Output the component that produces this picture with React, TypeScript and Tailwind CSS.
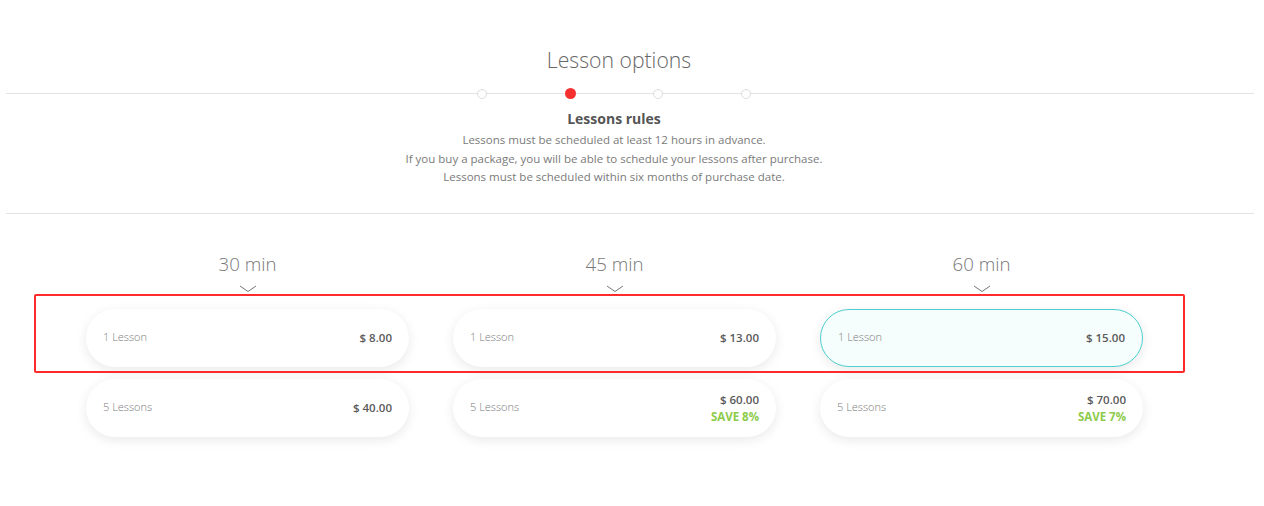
type option = {
    label: string,
    price: string,
    save?: string,
    selected?: boolean
}

type column = {
    duration: string,
    options: option[]
}

const columns: column[] = [
    {
        duration: "30 min",
        options: [
            { label: "1 Lesson", price: "$ 8.00" },
            { label: "5 Lessons", price: "$ 40.00" },
        ]
    },
    {
        duration: "45 min",
        options: [
            { label: "1 Lesson", price: "$ 13.00" },
            { label: "5 Lessons", price: "$ 60.00", save: "SAVE 8%" },
        ]
    },
    {
        duration: "60 min",
        options: [
            { label: "1 Lesson", price: "$ 15.00", selected: true },
            { label: "5 Lessons", price: "$ 70.00", save: "SAVE 7%" },
        ]
    },
]

const rules = [
    "Lessons must be scheduled at least 12 hours in advance.",
    "If you buy a package, you will be able to schedule your lessons after purchase.",
    "Lessons must be scheduled within six months of purchase date.",
]

function Dot({ active }: { active?: boolean }) {
    return active
        ? <span className="block w-[11px] h-[11px] rounded-full bg-[#f5302e] shrink-0" />
        : <span className="block w-[10px] h-[10px] rounded-full bg-white border border-[#dcdcdc] shrink-0" />
}

export default function App() {
    const cols = columns.map(({ duration, options }) => {
        return <div key={duration} className="flex flex-col items-center">
            <h3 className="text-[18.7px] leading-[26px] font-light text-[#777]">{duration}</h3>
            <svg width="18" height="8" viewBox="0 0 18 8" className="mt-[8px]">
                <path d="M1 1 L9 6.5 L17 1" fill="none" stroke="#666" strokeWidth="0.9" />
            </svg>
            <ul className="mt-[16px] flex flex-col gap-[12px] w-full">
                {options.map(({ label, price, save, selected }) => (
                    <li key={label} className={`h-[58px] rounded-full flex items-center justify-between px-[17px] shadow-[0_3px_12px_rgba(0,0,0,0.09)] ${selected ? "bg-[#f6fdfd] border border-[#4fcfd0]" : "bg-white"}`}>
                        <span className="text-[11px] font-light text-[#7a7a7a]">{label}</span>
                        <span className="flex flex-col items-end">
                            <span className="text-[11.5px] font-semibold text-[#5a5a5a] leading-[17px]">{price}</span>
                            {save && <span className="text-[11.5px] font-bold text-[#8dcb4a] leading-[17px]">{save}</span>}
                        </span>
                    </li>
                ))}
            </ul>
        </div>
    })

    return <div className="relative w-[1264px] h-[506px] bg-white overflow-hidden" style={{ fontFamily: '"Open Sans", "Noto Sans", sans-serif' }}>
        <div className="pt-[45px] w-[1238px] text-center">
            <h1 className="text-[21.2px] leading-[30px] font-light text-[#666]">Lesson options</h1>
        </div>

        <div className="mt-[13px] ml-[6px] mr-[10px] h-[11px] flex items-center">
            <span className="h-px w-[471px] bg-[#e2e2e2]" />
            <Dot />
            <span className="h-px w-[78px] bg-[#e2e2e2]" />
            <Dot active />
            <span className="h-px w-[77px] bg-[#e2e2e2]" />
            <Dot />
            <span className="h-px w-[78px] bg-[#e2e2e2]" />
            <Dot />
            <span className="h-px flex-1 bg-[#e2e2e2]" />
        </div>

        <section className="w-[1228px] flex flex-col items-center">
            <h2 className="mt-[10px] text-[14px] leading-[20px] font-bold text-[#555]">Lessons rules</h2>
            <div className="mt-[2px] text-[11.5px] leading-[18.5px] text-[#7a7a7a] text-center">
                {rules.map(r => <p key={r}>{r}</p>)}
            </div>
        </section>

        <div className="mt-[26px] ml-[6px] mr-[10px] h-px bg-[#e2e2e2]" />

        <div className="mt-[37px] ml-[86px] grid grid-cols-[323px_323px_323px] gap-x-[44px]">
            {cols}
        </div>

        <div className="absolute left-[34px] top-[294px] w-[1151px] h-[79px] border-2 border-[#ff2a2a] rounded-[2px] pointer-events-none" />
    </div>
}
